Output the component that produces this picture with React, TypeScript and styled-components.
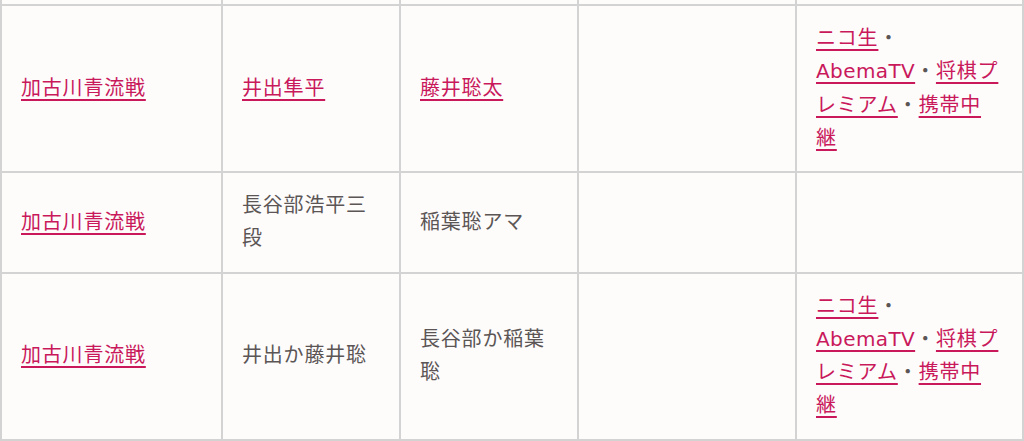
import React from "react";
import styled, { createGlobalStyle } from "styled-components";

const Global = createGlobalStyle`
  html, body { margin: 0; padding: 0; background: #fdfcfb; }
  body {
    font-family: "DejaVu Sans", "Noto Sans CJK JP", sans-serif;
    color: #5b5555;
  }
`;

const Table = styled.table`
  width: 1024px;
  table-layout: fixed;
  border-collapse: separate;
  border-spacing: 0;
  border-left: 2px solid #d3d3d3;
  border-top: 2px solid #d3d3d3;
  margin-top: -2px;
`;

const Cell = styled.td<{ $w: number }>`
  box-sizing: border-box;
  width: ${(p) => p.$w}px;
  padding: 16px 22px 16px 19px;
  border-right: 2px solid #d3d3d3;
  border-bottom: 2px solid #d3d3d3;
  vertical-align: middle;
  font-size: 20px;
  line-height: 33.25px;
  letter-spacing: 0.04em;
`;

const StubCell = styled.td<{ $w: number }>`
  box-sizing: border-box;
  width: ${(p) => p.$w}px;
  height: 6px;
  padding: 0;
  border-right: 2px solid #d3d3d3;
  border-bottom: 2px solid #d3d3d3;
`;

const Link = styled.a<{ $latin?: boolean }>`
  color: #c9195b;
  text-decoration: underline;
  text-decoration-thickness: 1.5px;
  text-underline-offset: 4px;
  letter-spacing: ${(p) => (p.$latin ? "0.02em" : "0.04em")};
`;

const Sep = styled.span`
  color: #5b5555;
`;

const widths = [221, 178, 178, 218, 227];

const Media: React.FC = () => (
  <>
    <Link href="#">ニコ生</Link>
    <Sep>・</Sep>
    <Link href="#" $latin>
      AbemaTV
    </Link>
    <Sep>・</Sep>
    <Link href="#">将棋プレミアム</Link>
    <Sep>・</Sep>
    <Link href="#">携帯中継</Link>
  </>
);

type Row = React.ReactNode[];

const rows: Row[] = [
  [
    <Link href="#">加古川青流戦</Link>,
    <Link href="#">井出隼平</Link>,
    <Link href="#">藤井聡太</Link>,
    null,
    <Media />,
  ],
  [<Link href="#">加古川青流戦</Link>, "長谷部浩平三段", "稲葉聡アマ", null, null],
  [<Link href="#">加古川青流戦</Link>, "井出か藤井聡", "長谷部か稲葉聡", null, <Media />],
];

export default function App() {
  return (
    <>
      <Global />
      <Table>
        <tbody>
          <tr>
            {widths.map((w, i) => (
              <StubCell key={i} $w={w} />
            ))}
          </tr>
          {rows.map((r, ri) => (
            <tr key={ri}>
              {r.map((c, ci) => (
                <Cell key={ci} $w={widths[ci]}>
                  {c}
                </Cell>
              ))}
            </tr>
          ))}
          <tr>
            {widths.map((w, i) => (
              <Cell key={i} $w={w}>
                &nbsp;
              </Cell>
            ))}
          </tr>
        </tbody>
      </Table>
    </>
  );
}
